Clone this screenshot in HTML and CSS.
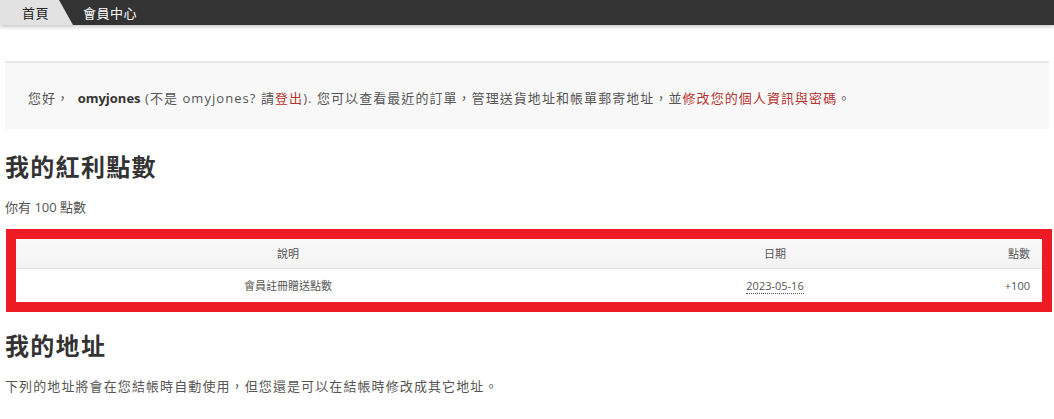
FILE: index.html
```html
<!DOCTYPE html>
<html lang="zh-Hant">
<head>
<meta charset="utf-8">
<title>會員中心</title>
<link rel="stylesheet" href="styles.css">
</head>
<body>
<nav class="crumbs">
  <a class="crumb-home" href="#">首頁</a>
  <span class="crumb-current">會員中心</span>
</nav>
<main class="page">
  <div class="notice">您好， <strong>omyjones</strong> (不是 omyjones? 請<a href="#" class="link">登出</a>). 您可以查看最近的訂單，管理送貨地址和帳單郵寄地址，並<a href="#" class="link">修改您的個人資訊與密碼</a>。</div>
  <h2 class="title">我的紅利點數</h2>
  <p class="text">你有 100 點數</p>
  <div class="highlight">
    <table class="points">
      <thead>
        <tr><th class="c-desc">說明</th><th class="c-date">日期</th><th class="c-pts">點數</th></tr>
      </thead>
      <tbody>
        <tr><td class="c-desc">會員註冊贈送點數</td><td class="c-date"><abbr title="2023-05-16">2023-05-16</abbr></td><td class="c-pts">+100</td></tr>
      </tbody>
    </table>
  </div>
  <h2 class="title title-2">我的地址</h2>
  <p class="text text-wide">下列的地址將會在您結帳時自動使用，但您還是可以在結帳時修改成其它地址。</p>
</main>
</body>
</html>
```
FILE: styles.css
```css
* { box-sizing: border-box; }
html, body { margin: 0; padding: 0; background: #fff; }
body {
  font-family: "Open Sans", "Noto Sans CJK TC", sans-serif;
  color: #555;
  font-size: 14px;
}
.crumbs {
  display: flex;
  align-items: center;
  height: 25px;
  background: #333;
  box-shadow: 0 2px 4px rgba(0,0,0,0.22);
  position: relative;
}
.crumb-home {
  display: flex;
  align-items: center;
  height: 25px;
  width: 73px;
  padding-left: 22px;
  background: #e2e2e2;
  color: #222;
  text-decoration: none;
  font-size: 13px;
  letter-spacing: 0.5px;
  clip-path: polygon(0 0, 59px 0, 73px 100%, 0 100%);
}
.crumb-current {
  margin-left: 10px;
  color: #fff;
  font-size: 13px;
  letter-spacing: 0.5px;
}
.page {
  padding: 0 5px;
}
.notice {
  margin-top: 36px;
  height: 68px;
  background: #f8f8f8;
  border-top: 2px solid #e8e8e8;
  padding: 26px 23px 0;
  line-height: 18px;
  font-size: 13px;
  color: #555;
  letter-spacing: 1.06px;
  white-space: nowrap;
}
.notice strong { color: #333; letter-spacing: 0; padding-left: 3px; }
.link { color: #b5332d; text-decoration: none; }
.title {
  margin: 0;
  padding-top: 22px;
  font-size: 24px;
  line-height: 32px;
  font-weight: bold;
  color: #333;
  letter-spacing: 1.3px;
}
.text {
  margin: 14px 0 0;
  font-size: 13px;
  line-height: 20px;
}
.text-wide { letter-spacing: 1.1px; }
.highlight {
  margin: 12px -3px 0 1px;
  border: 10px solid #ed1c24;
}
.points {
  width: 100%;
  border-collapse: collapse;
  font-size: 11px;
  color: #555;
}
.points th {
  height: 29px;
  font-weight: normal;
  background: linear-gradient(#f9f9f9, #f3f3f3);
  border-bottom: 1px solid #e4e4e4;
  padding: 0 12px;
}
.points td {
  height: 34px;
  padding: 0 12px;
  background: #fff;
}
.c-desc { width: 544px; text-align: center; }
.c-date { width: 430px; text-align: center; }
.c-pts { text-align: right; }
abbr {
  text-decoration: none;
  border-bottom: 1px dotted #555;
}
.title-2 { padding-top: 18px; }
```
